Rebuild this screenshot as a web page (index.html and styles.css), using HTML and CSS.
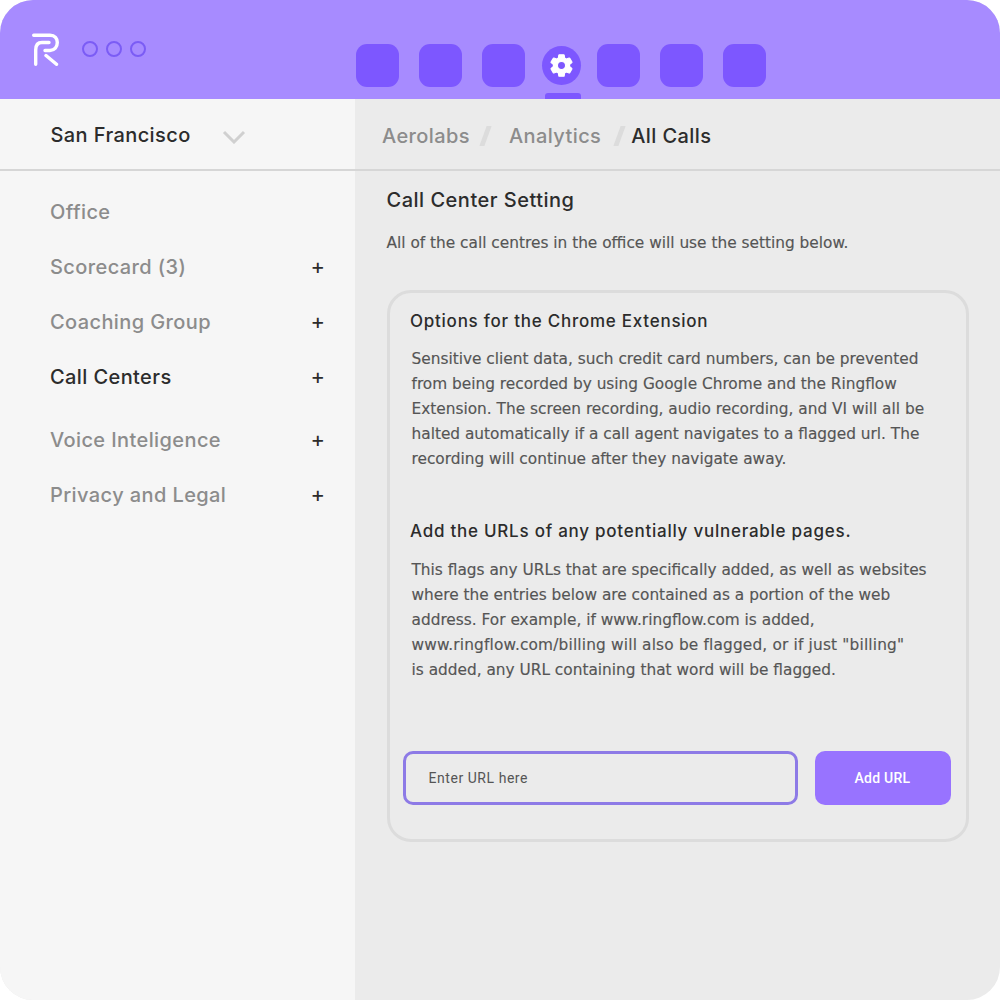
FILE: index.html
```html
<!DOCTYPE html>
<html lang="en">
<head>
<meta charset="utf-8">
<title>Call Center Setting</title>
<link rel="stylesheet" href="styles.css">
</head>
<body>
<div class="app">
  <header class="topbar">
    <svg class="logo" width="27" height="33" viewBox="0 0 27 33" fill="none" stroke="#fff" stroke-width="3.4" stroke-linecap="round" stroke-linejoin="round">
      <path d="M1.700 2.200H18C23 2.200 25.300 5.500 25.300 9.500C25.300 14 22.500 17.500 18 17.500H13"/>
      <path d="M3.700 31.300V17C3.700 12 6 9.500 10 9.500H17"/>
      <path d="M14 22.500L24.500 31.300"/>
    </svg>
    <div class="dots"><span class="dot"></span><span class="dot"></span><span class="dot"></span></div>
    <nav class="nav">
      <span class="tile"></span>
      <span class="tile"></span>
      <span class="tile"></span>
      <span class="tile-active">
        <span class="gear">
          <svg width="27" height="27" viewBox="0 0 24 24" fill="#fff" stroke="#fff" stroke-width="1" stroke-linejoin="round"><path fill-rule="evenodd" d="M19.140 12.940c.04-.3.060-.61.060-.94 0-.32-.020-.64-.070-.94l2.030-1.580a.49.49 0 0 0 .12-.61l-1.920-3.320a.488.488 0 0 0-.59-.22l-2.390.96c-.5-.38-1.030-.7-1.620-.94l-.36-2.540a.484.484 0 0 0-.48-.41h-3.840c-.24 0-.43.170-.47.41l-.36 2.540c-.59.240-1.130.570-1.620.94l-2.390-.96c-.22-.080-.47 0-.59.220L2.740 8.870c-.12.210-.080.470.120.610l2.030 1.580c-.05.300-.09.630-.09.940s.02.640.07.940l-2.030 1.580a.49.49 0 0 0-.12.610l1.920 3.320c.12.220.37.290.59.220l2.390-.96c.5.380 1.030.7 1.620.94l.36 2.540c.05.240.24.410.48.410h3.840c.24 0 .44-.17.47-.41l.36-2.540c.59-.24 1.130-.56 1.620-.94l2.390.96c.22.080.47 0 .59-.22l1.920-3.320c.12-.22.070-.47-.12-.61l-2.010-1.580zM12 15.600c-1.980 0-3.600-1.620-3.600-3.600s1.620-3.600 3.600-3.600 3.600 1.620 3.600 3.600-1.620 3.600-3.600 3.600z"/></svg>
        </span>
        <span class="marker"></span>
      </span>
      <span class="tile"></span>
      <span class="tile"></span>
      <span class="tile"></span>
    </nav>
  </header>
  <div class="body">
    <aside class="sidebar">
      <div class="office-select">
        <span class="office-name">San Francisco</span>
        <svg class="chevron" width="24" height="14" viewBox="0 0 24 14" fill="none" stroke="#d0d0d0" stroke-width="3"><path d="M2 2l10 10L22 2"/></svg>
      </div>
      <ul class="menu">
        <li class="menu-item">Office</li>
        <li class="menu-item">Scorecard (3)<span class="plus">+</span></li>
        <li class="menu-item">Coaching Group<span class="plus">+</span></li>
        <li class="menu-item menu-current">Call Centers<span class="plus">+</span></li>
        <li class="menu-item">Voice Inteligence<span class="plus">+</span></li>
        <li class="menu-item">Privacy and Legal<span class="plus">+</span></li>
      </ul>
    </aside>
    <main class="main">
      <div class="crumbs">
        <span class="crumb">Aerolabs</span><span class="slash"></span>
        <span class="crumb">Analytics</span><span class="slash slash-last"></span>
        <span class="crumb-current">All Calls</span>
      </div>
      <section class="content">
        <h1 class="title">Call Center Setting</h1>
        <p class="subtitle">All of the call centres in the office will use the setting below.</p>
        <div class="card">
          <h2 class="card-title">Options for the Chrome Extension</h2>
          <p class="card-text">Sensitive client data, such credit card numbers, can be prevented<br>from being recorded by using Google Chrome and the Ringflow<br>Extension. The screen recording, audio recording, and VI will all be<br>halted automatically if a call agent navigates to a flagged url. The<br>recording will continue after they navigate away.</p>
          <h2 class="card-title second">Add the URLs of any potentially vulnerable pages.</h2>
          <p class="card-text">This flags any URLs that are specifically added, as well as websites<br>where the entries below are contained as a portion of the web<br>address. For example, if www.ringflow.com is added,<br><span class="wide-line">www.ringflow.com/billing will also be flagged, or if just "billing"</span><br>is added, any URL containing that word will be flagged.</p>
          <div class="url-row">
            <div class="url-input">Enter URL here</div>
            <div class="url-btn">Add URL</div>
          </div>
        </div>
      </section>
    </main>
  </div>
</div>
</body>
</html>
```
FILE: styles.css
```css
* { box-sizing: border-box; }
html, body { margin: 0; padding: 0; background: #fff; }
body { width: 1000px; height: 1000px; overflow: hidden; font-family: "DejaVu Sans", sans-serif; }
.app { width: 1000px; height: 1000px; border-radius: 33px; overflow: hidden; display: flex; flex-direction: column; background: #ebebeb; }
.topbar { height: 99px; flex: none; background: #a78bff; display: flex; align-items: flex-start; padding-left: 32px; }
.logo { margin-top: 33px; flex: none; }
.dots { display: flex; gap: 8px; margin: 41px 0 0 23px; }
.dot { width: 16px; height: 16px; border-radius: 50%; border: 2px solid #7b5cf5; }
.nav { display: flex; margin: 44px 0 0 210px; gap: 20px; height: 55px; }
.tile { width: 43px; height: 43px; border-radius: 11px; background: #7d57ff; }
.tile-active { width: 39px; margin: 2px -4px 0 -3px; display: flex; flex-direction: column; align-items: center; justify-content: space-between; height: 53px; }
.gear { width: 39px; height: 39px; border-radius: 50%; background: #7d57ff; display: flex; align-items: center; justify-content: center; flex: none; }
.marker { width: 36px; height: 6px; margin-left: 2px; background: #7d57ff; border-radius: 3px 3px 0 0; flex: none; }
.body { flex: 1; display: flex; min-height: 0; }
.sidebar { width: 355px; flex: none; background: #f6f6f6; }
.office-select { height: 72px; border-bottom: 2px solid #d6d6d6; display: flex; align-items: center; padding: 2px 0 0 50.500px; }
.office-name { font-family: "Inter", sans-serif; font-size: 20px; font-weight: 500; letter-spacing: .4px; color: #2c2c2c; width: 171.500px; }
.chevron { margin-top: 3px; }
.menu { list-style: none; margin: 13px 0 0; padding: 0 0 0 50px; }
.menu-item { height: 55px; display: flex; align-items: center; justify-content: space-between; padding-right: 30px; font-family: "Inter", sans-serif; font-size: 20px; font-weight: 500; letter-spacing: .4px; color: #8c8c8c; }
.menu-item:nth-child(5) { margin-top: 8px; }
.menu-current { color: #2c2c2c; }
.plus { font-size: 22px; font-weight: 400; letter-spacing: 0; color: #2c2c2c; margin-top: -2px; }
.main { flex: 1; min-width: 0; }
.crumbs { height: 72px; border-bottom: 2px solid #d6d6d6; display: flex; align-items: center; padding: 3px 0 0 27px; font-family: "Inter", sans-serif; font-size: 20px; font-weight: 500; letter-spacing: .4px; }
.crumb { color: #8c8c8c; }
.crumb-current { color: #2c2c2c; }
.slash { width: 5px; height: 20px; background: #dcdcdc; transform: skewX(-20deg); margin: 0 21px 0 13px; }
.slash-last { margin: 0 9px 0 16px; }
.content { padding: 17px 31px 0 31.500px; }
.title { margin: 0; font-family: "Inter", sans-serif; font-size: 20px; font-weight: 500; letter-spacing: .5px; color: #2c2c2c; line-height: 24px; }
.subtitle { margin: 21px 0 0; font-size: 15.350px; color: #555; line-height: 20px; -webkit-text-stroke: .15px #555; }
.card { margin-top: 37px; height: 552px; border: 3px solid #dcdcdc; border-radius: 24px; padding: 16px 15px 0 13px; }
.card-title { margin: 0 0 0 7.500px; font-family: "Inter", sans-serif; font-size: 17px; font-weight: 500; letter-spacing: .75px; color: #2c2c2c; line-height: 24px; }
.second { margin-top: 47px; padding-bottom: 1px; }
.card-text { margin: 14px 0 0 9px; font-size: 15.350px; line-height: 25px; color: #555; -webkit-text-stroke: .15px #555; }
.wide-line { letter-spacing: .17px; }
.url-row { display: flex; gap: 17px; margin-top: 68px; }
.url-input { width: 395px; height: 54px; border: 3px solid #8d7ae6; border-radius: 10px; display: flex; align-items: center; padding-left: 23px; font-family: "Roboto", sans-serif; font-size: 14px; letter-spacing: .55px; color: #555; }
.url-btn { width: 136px; height: 54px; border-radius: 10px; background: #9873ff; color: #fff; display: flex; align-items: center; justify-content: center; font-family: "Roboto", sans-serif; font-size: 14px; font-weight: 500; letter-spacing: .25px; }
```
